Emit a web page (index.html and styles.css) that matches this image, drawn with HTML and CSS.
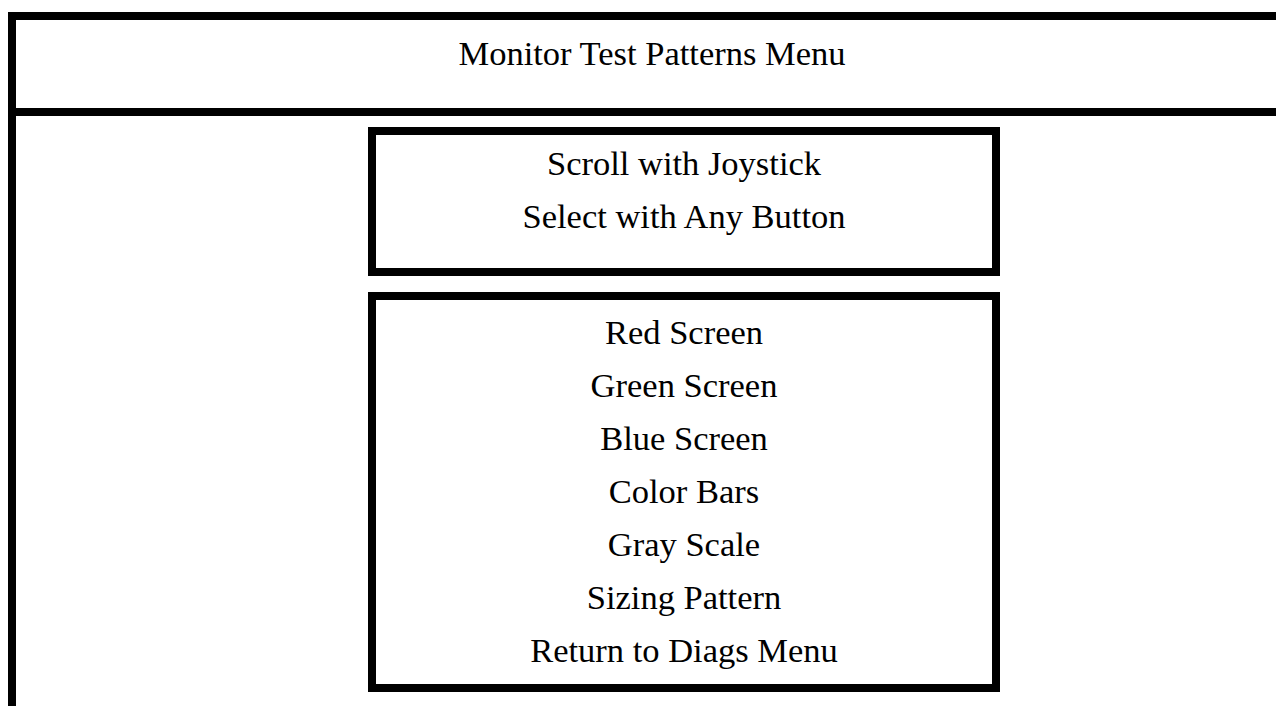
FILE: index.html
```html
<!DOCTYPE html>
<html lang="en">
<head>
    <meta charset="UTF-8">
    <meta name="viewport" content="width=device-width, initial-scale=1.0">
    <title>Monitor Test Patterns</title>
    <link rel="stylesheet" href="styles.css">
</head>
<body>
    <div class="frame">
        <div class="title">Monitor Test Patterns Menu</div>
        <div class="menu">
            <div class="box help">
                <div>Scroll with Joystick</div>
                <div>Select with Any Button</div>
            </div>
            <div class="box items">
                <div>Red Screen</div>
                <div>Green Screen</div>
                <div>Blue Screen</div>
                <div>Color Bars</div>
                <div>Gray Scale</div>
                <div>Sizing Pattern</div>
                <div>Return to Diags Menu</div>
            </div>
        </div>
    </div>
</body>
</html>
```

FILE: styles.css
```css
html,body{margin:0;padding:0;overflow:hidden;background:#fff;}
body{
    font-family:"Liberation Serif","Times New Roman",serif;
    font-size:34.5px;
    color:#000;
}
.frame{
    margin:12px 0 0 8px;
    width:1272px;
    height:686px;
    border:8px solid #000;
    border-bottom:0;
}
.title{
    height:74px;
    padding-top:14px;
    text-align:center;
    border-bottom:8px solid #000;
}
.menu{
    display:flex;
    flex-direction:column;
    align-items:center;
    gap:16px;
    padding:11px 0 0 64px;
}
.box{
    width:616px;
    border:8px solid #000;
    text-align:center;
    line-height:53px;
}
.help{height:131px;padding-top:2px;}
.items{height:378px;padding-top:6px;}
```
